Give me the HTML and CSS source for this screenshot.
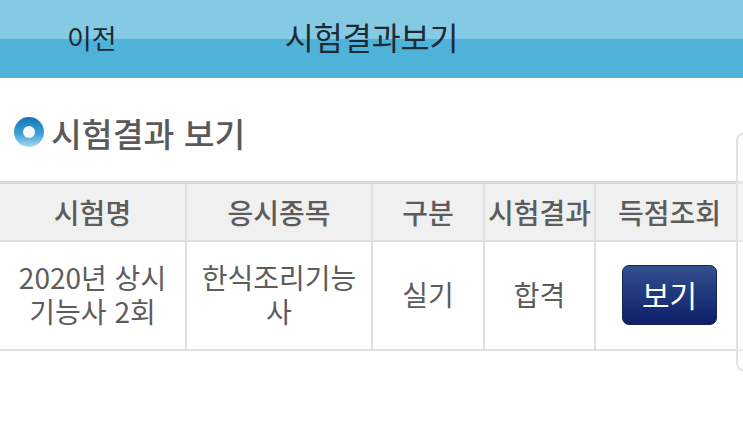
FILE: index.html
```html
<!DOCTYPE html>
<html lang="ko">
<head>
    <meta charset="UTF-8">
    <meta name="viewport" content="width=device-width, initial-scale=1.0">
    <title>시험결과보기</title>
    <link rel="stylesheet" href="styles.css">
</head>
<body>
    <header class="topbar">
        <a class="back">이전</a>
        <h1 class="topbar-title">시험결과보기</h1>
    </header>

    <h2 class="section-title">
        <svg class="bullet" width="30" height="30" viewBox="0 0 30 30">
            <defs>
                <linearGradient id="ring" x1="0" y1="0" x2="0" y2="1">
                    <stop offset="0" stop-color="#0f76b4"></stop>
                    <stop offset="0.55" stop-color="#3d9fd6"></stop>
                    <stop offset="1" stop-color="#a5daf3"></stop>
                </linearGradient>
            </defs>
            <circle cx="15" cy="15" r="15" fill="url(#ring)"></circle>
            <circle cx="15" cy="15" r="6" fill="#f4f8fa"></circle>
        </svg>
        시험결과 보기
    </h2>

    <table class="result-table">
        <tr>
            <th class="col-name">시험명</th>
            <th class="col-item">응시종목</th>
            <th class="col-type">구분</th>
            <th class="col-result">시험결과</th>
            <th class="col-score">득점조회</th>
        </tr>
        <tr>
            <td>2020년 상시<br>기능사 2회</td>
            <td>한식조리기능<br>사</td>
            <td>실기</td>
            <td>합격</td>
            <td><button class="view-btn">보기</button></td>
        </tr>
    </table>

    <div class="side-handle"></div>
</body>
</html>
```
FILE: styles.css
```css
body {
    margin: 0;
    height: 431px;
    overflow: hidden;
    position: relative;
    background-color: white;
    font-family: "Noto Sans CJK KR", "Noto Sans", sans-serif;
    color: #5c5c5c;
}

.topbar {
    display: flex;
    align-items: center;
    height: 78px;
    box-sizing: border-box;
    padding-bottom: 4px;
    background: linear-gradient(to bottom, #85cae5 0, #85cae5 39px, #4fb3d9 39px, #4fb3d9 100%);
    color: #1c2a33;
}

.back {
    margin-left: 67px;
    font-size: 27px;
    line-height: 1;
}

.topbar-title {
    margin: 0 0 0 168px;
    font-size: 31.5px;
    font-weight: normal;
    line-height: 1;
}

.section-title {
    display: flex;
    align-items: center;
    gap: 7px;
    margin: 35px 0 30px 14px;
    height: 38px;
    font-size: 33.5px;
    font-weight: 500;
    color: #5a5a5a;
}

.result-table {
    width: 743px;
    table-layout: fixed;
    border-collapse: collapse;
    border-top: 3px solid #d8d8d8;
    font-size: 28px;
}

.result-table th,
.result-table td {
    border: 2px solid #e0e0e0;
    padding: 0;
    text-align: center;
}

.result-table tr > :first-child {
    border-left: none;
}

.result-table tr > :last-child {
    border-right: none;
}

.result-table th {
    height: 56px;
    background-color: #f0f0f0;
    font-weight: 500;
}

.result-table td {
    height: 104px;
    padding-bottom: 3px;
    font-weight: 400;
    line-height: 34px;
}

.col-name { width: 185px; }
.col-item { width: 184px; }
.col-type { width: 110px; }
.col-result { width: 109px; }

.view-btn {
    display: block;
    margin: 2px 0 0 26px;
    width: 95px;
    height: 60px;
    border: 1px solid #16245f;
    border-radius: 7px;
    background: linear-gradient(to bottom, #33508f, #0e1f68);
    color: white;
    font-family: inherit;
    font-size: 30px;
    padding: 0 0 3px;
}

.side-handle {
    position: absolute;
    top: 132px;
    right: -11px;
    width: 18px;
    height: 240px;
    box-sizing: border-box;
    border: 2px solid #e2e2e2;
    border-radius: 10px;
    background-color: rgba(255, 255, 255, 0.4);
}
```
